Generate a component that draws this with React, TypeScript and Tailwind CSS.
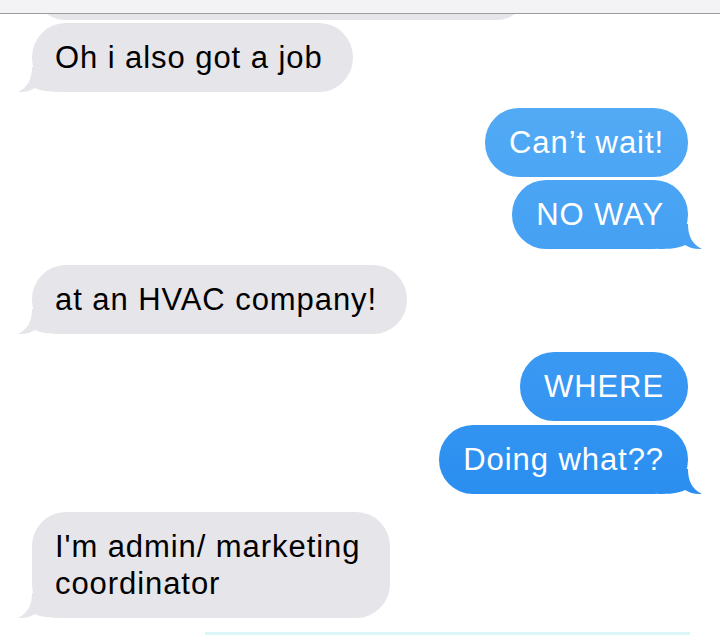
import React from 'react';

type Message = {
  text: React.ReactNode;
  fromMe: boolean;
  tail: boolean;
  gap: string;
};

const messages: Message[] = [
  { text: 'Oh i also got a job', fromMe: false, tail: true, gap: 'mt-[3px]' },
  { text: 'Can’t wait!', fromMe: true, tail: false, gap: 'mt-[16px]' },
  { text: 'NO WAY', fromMe: true, tail: true, gap: 'mt-[3px]' },
  { text: 'at an HVAC company!', fromMe: false, tail: true, gap: 'mt-[16px]' },
  { text: 'WHERE', fromMe: true, tail: false, gap: 'mt-[18px]' },
  { text: 'Doing what??', fromMe: true, tail: true, gap: 'mt-[4px]' },
  {
    text: (
      <>
        I'm admin/ marketing
        <br />
        coordinator
      </>
    ),
    fromMe: false,
    tail: true,
    gap: 'mt-[18px]',
  },
];

const Bubble: React.FC<{ msg: Message }> = ({ msg }) => {
  if (msg.fromMe) {
    return (
      <div className={`flex justify-end pr-[32px] ${msg.gap}`}>
        <div className="relative">
          {msg.tail && (
            <div className="absolute right-[-14px] bottom-[-1px] w-[44px] h-[26px] bg-fixed bg-linear-to-b from-[#5db2f6] to-[#1684ee] [clip-path:path('M30_0C30_12_34_20_44_25C37_25.5_31_23.5_27_21C20_24.5_12_25_0_25L0_0Z')]" />
          )}
          <div className="relative rounded-[34px] bg-fixed bg-linear-to-b from-[#5db2f6] to-[#1684ee] px-[24px] py-[16px] text-white">
            {msg.text}
          </div>
        </div>
      </div>
    );
  }
  return (
    <div className={`flex justify-start pl-[32px] ${msg.gap}`}>
      <div className="relative">
        {msg.tail && (
          <div className="absolute left-[-14px] bottom-[-1px] w-[44px] h-[26px] bg-[#e5e5ea] [clip-path:path('M14_0C14_12_10_20_0_25C7_25.5_13_23.5_17_21C24_24.5_32_25_44_25L44_0Z')]" />
        )}
        <div className="relative rounded-[34px] bg-[#e5e5ea] pl-[23px] pr-[30px] py-[16px] text-black">
          {msg.text}
        </div>
      </div>
    </div>
  );
};

export default function App() {
  return (
    <div
      className="w-[720px] h-[635px] overflow-hidden bg-white flex flex-col text-[31px] leading-[37px] tracking-[0.03em]"
      style={{ fontFamily: '"Liberation Sans", Arial, sans-serif' }}
    >
      {/* header strip over the previous bubble */}
      <div className="h-[14px] shrink-0 bg-[#f3f3f5] border-b border-[#9c9ca1]" />
      <div className="h-[6px] shrink-0 overflow-hidden pl-[32px]">
        <div className="w-[498px] h-[69px] mt-[-63px] rounded-[34px] bg-[#e5e5ea]" />
      </div>

      {messages.map((m, i) => (
        <Bubble key={i} msg={m} />
      ))}

      <div className="mt-auto ml-[205px] w-[485px] h-[3px] bg-[#dcf5f8]" />
    </div>
  );
}
